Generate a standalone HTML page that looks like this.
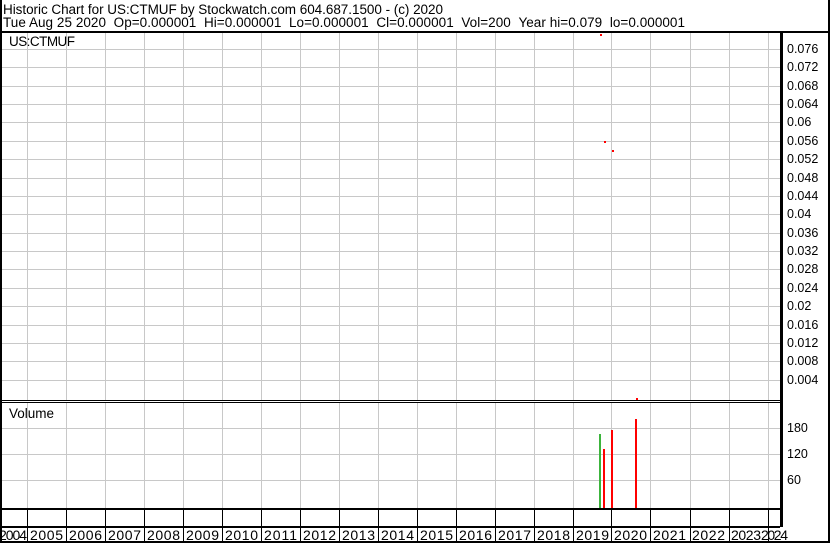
<!DOCTYPE html>
<html><head><style>
html,body{margin:0;padding:0;background:#fff;}
svg{display:block;font-family:"Liberation Sans",Arial,sans-serif;}
</style></head><body>
<svg width="830" height="543" viewBox="0 0 830 543" xmlns="http://www.w3.org/2000/svg">
<rect width="830" height="543" fill="#fff"/>
<g font-size="13.5" fill="#000">
<text x="3" y="14" textLength="440" lengthAdjust="spacing">Historic Chart for US:CTMUF by Stockwatch.com 604.687.1500 - (c) 2020</text>
<text x="3" y="27" textLength="682" lengthAdjust="spacing">Tue Aug 25 2020 &#160;Op=0.000001 &#160;Hi=0.000001 &#160;Lo=0.000001 &#160;Cl=0.000001 &#160;Vol=200 &#160;Year hi=0.079 &#160;lo=0.000001</text>
</g>
<g stroke="#c8c8c8" stroke-width="1">
<path d="M27.5 33V400M66.5 33V400M105.5 33V400M144.5 33V400M183.5 33V400M222.5 33V400M261.5 33V400M300.5 33V400M339.5 33V400M378.5 33V400M417.5 33V400M456.5 33V400M495.5 33V400M534.5 33V400M573.5 33V400M611.5 33V400M650.5 33V400M690.5 33V400M729.5 33V400M768.5 33V400"/>
<path d="M27.5 403V509M66.5 403V509M105.5 403V509M144.5 403V509M183.5 403V509M222.5 403V509M261.5 403V509M300.5 403V509M339.5 403V509M378.5 403V509M417.5 403V509M456.5 403V509M495.5 403V509M534.5 403V509M573.5 403V509M611.5 403V509M650.5 403V509M690.5 403V509M729.5 403V509M768.5 403V509"/>
<path d="M2 49.5H781M2 67.5H781M2 86.5H781M2 104.5H781M2 122.5H781M2 141.5H781M2 159.5H781M2 178.5H781M2 196.5H781M2 214.5H781M2 233.5H781M2 251.5H781M2 269.5H781M2 288.5H781M2 306.5H781M2 325.5H781M2 343.5H781M2 361.5H781M2 380.5H781"/>
<path d="M2 428.5H781M2 454.5H781M2 480.5H781"/>
</g>
<g fill="#000">
<rect x="0" y="0" width="2" height="543"/>
<rect x="828" y="0" width="2" height="543"/>
<rect x="0" y="31" width="830" height="2"/>
<rect x="780" y="33" width="3" height="494"/>
<rect x="2" y="400" width="778" height="1"/>
<rect x="2" y="402" width="778" height="1"/>
<rect x="2" y="508" width="778" height="2"/>
<rect x="2" y="526" width="778" height="2"/>
<rect x="0" y="541" width="830" height="2"/>
</g>
<g stroke="#000" stroke-width="1">
<path d="M27.5 510V541M66.5 510V541M105.5 510V541M144.5 510V541M183.5 510V541M222.5 510V541M261.5 510V541M300.5 510V541M339.5 510V541M378.5 510V541M417.5 510V541M456.5 510V541M495.5 510V541M534.5 510V541M573.5 510V541M611.5 510V541M650.5 510V541M690.5 510V541M729.5 510V541M768.5 510V541"/>
</g>
<g font-size="13.5" fill="#000">
<text x="9" y="46" textLength="66" lengthAdjust="spacing">US:CTMUF</text>
<text x="9" y="418" textLength="45" lengthAdjust="spacing">Volume</text>
</g>
<g font-size="12.5" fill="#000">
<text x="787" y="53">0.076</text><text x="787" y="71">0.072</text><text x="787" y="90">0.068</text><text x="787" y="108">0.064</text><text x="787" y="126">0.06</text><text x="787" y="145">0.056</text><text x="787" y="163">0.052</text><text x="787" y="182">0.048</text><text x="787" y="200">0.044</text><text x="787" y="218">0.04</text><text x="787" y="237">0.036</text><text x="787" y="255">0.032</text><text x="787" y="273">0.028</text><text x="787" y="292">0.024</text><text x="787" y="310">0.02</text><text x="787" y="329">0.016</text><text x="787" y="347">0.012</text><text x="787" y="365">0.008</text><text x="787" y="384">0.004</text>
<text x="787" y="432">180</text><text x="787" y="458">120</text><text x="787" y="484">60</text>
</g>
<g font-size="14" fill="#000">
<text x="-1" y="540" textLength="28">2004</text><text x="30" y="540" textLength="33">2005</text><text x="69" y="540" textLength="33">2006</text><text x="108" y="540" textLength="33">2007</text><text x="147" y="540" textLength="33">2008</text><text x="186" y="540" textLength="33">2009</text><text x="225" y="540" textLength="33">2010</text><text x="264" y="540" textLength="33">2011</text><text x="303" y="540" textLength="33">2012</text><text x="342" y="540" textLength="33">2013</text><text x="381" y="540" textLength="33">2014</text><text x="420" y="540" textLength="33">2015</text><text x="459" y="540" textLength="33">2016</text><text x="498" y="540" textLength="33">2017</text><text x="537" y="540" textLength="33">2018</text><text x="576" y="540" textLength="33">2019</text><text x="614" y="540" textLength="33">2020</text><text x="653" y="540" textLength="33">2021</text><text x="692" y="540" textLength="33">2022</text><text x="731" y="540" textLength="30">2023</text><text x="761" y="540" textLength="27">2024</text>
</g>
<rect x="788" y="527" width="40" height="14" fill="#fff"/>
<g fill="#f00">
<rect x="600" y="34" width="2" height="2"/>
<rect x="604" y="141" width="2" height="2"/>
<rect x="612" y="150" width="2" height="2"/>
<rect x="636" y="398" width="2" height="2"/>
</g>
<rect x="599" y="434" width="2" height="74" fill="#3cb43c"/>
<rect x="603" y="449" width="2" height="59" fill="#f00"/>
<rect x="611" y="430" width="2" height="78" fill="#f00"/>
<rect x="635" y="419" width="2" height="89" fill="#f00"/>
</svg>
</body></html>
